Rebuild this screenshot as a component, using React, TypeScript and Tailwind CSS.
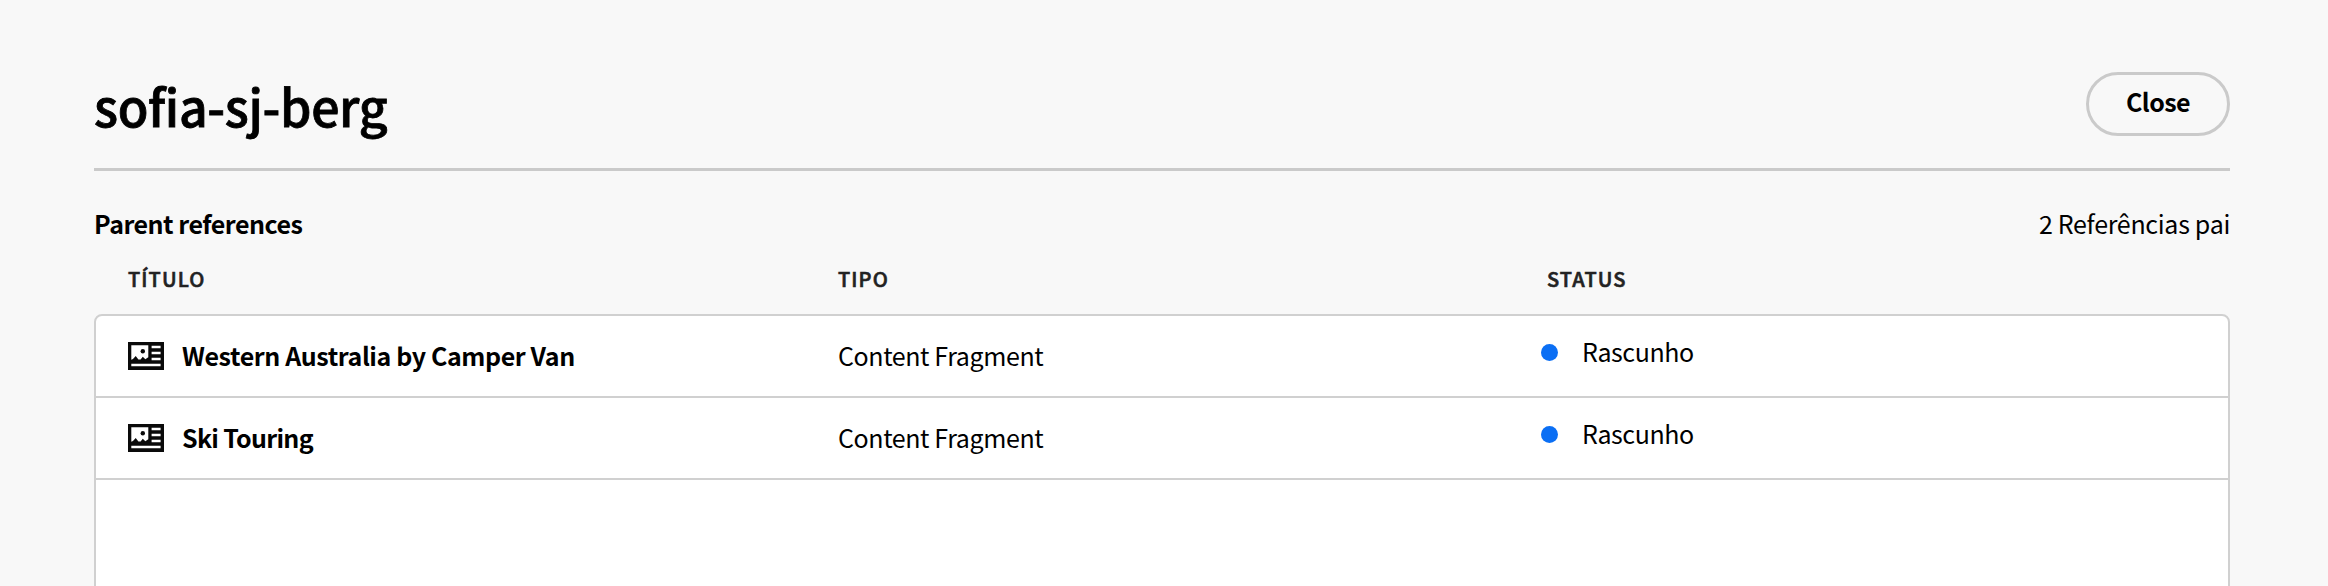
const rows = [
  { title: 'Western Australia by Camper Van', tracking: 'tracking-[-0.4px]', type: 'Content Fragment', status: 'Rascunho' },
  { title: 'Ski Touring', tracking: 'tracking-[-0.7px]', type: 'Content Fragment', status: 'Rascunho' },
];

const columns = 'grid grid-cols-[710px_709px_1fr]';

function FragmentIcon() {
  return (
    <svg className="h-7 w-9 shrink-0" viewBox="0 0 36 28" aria-hidden="true">
      <path
        fillRule="evenodd"
        fill="#0a0a0a"
        d="M0 0H36V28H0ZM3.3 3.3V17.8L5 17L7.7 14L10.4 17.6L12.6 17.6L14.8 14.7L17.3 17.2L20.3 15.3V3.3ZM23.6 3.7V6.3H32.6V3.7ZM23.6 9.8V12.3H32.6V9.8ZM23.6 15.8V18.3H32.6V15.8ZM3.3 21.7V24.2H32.6V21.7Z"
      />
      <circle cx="14.8" cy="9.3" r="2.2" fill="#0a0a0a" />
    </svg>
  );
}

export default function App() {
  return (
    <div className="flex h-[586px] w-[2328px] flex-col overflow-hidden bg-[#f8f8f8] pr-[98px] pl-[94px] font-['Noto_Sans_CJK_SC',sans-serif] text-[25px] tracking-[-0.4px] whitespace-nowrap text-black">
      <header className="flex h-[171px] shrink-0 items-start justify-between border-b-[3px] border-[#cacaca] pt-[69px]">
        <h1 className="text-[50px] leading-[72px] font-medium tracking-[-0.35px] [-webkit-text-stroke:0.8px_black]">
          sofia-sj-berg
        </h1>
        <button className="mt-[3px] flex h-16 w-36 items-center justify-center rounded-full border-[3px] border-[#cacaca] pb-1.5 leading-[36px] font-bold tracking-[-0.5px]">
          Close
        </button>
      </header>
      <div className="flex h-[83px] shrink-0 items-start justify-between pt-[34px] leading-[36px]">
        <h2 className="font-bold tracking-[-0.5px]">Parent references</h2>
        <span className="tracking-[-0.3px]">2 Referências pai</span>
      </div>
      <div className={`${columns} h-[60px] shrink-0 pt-[10px] pl-[34px] text-[20px] leading-[30px] font-medium tracking-[1.1px] text-[#222] [-webkit-text-stroke:0.6px_#222]`}>
        <span>TÍTULO</span>
        <span>TIPO</span>
        <span>STATUS</span>
      </div>
      <div className="-mb-3 flex-1 rounded-lg border-2 border-[#d0d0d0] bg-white">
        {rows.map((row) => (
          <div key={row.title} className={`${columns} h-[82px] border-b-2 border-[#d0d0d0] pl-8 leading-[36px]`}>
            <div className="flex items-start pt-[26px]">
              <FragmentIcon />
              <span className={`-mt-[5px] ml-[18px] font-bold ${row.tracking}`}>{row.title}</span>
            </div>
            <span className="pt-[21px]">{row.type}</span>
            <div className="-ml-[6px] flex items-start pt-[17px]">
              <span className="mt-[11px] size-[17px] shrink-0 rounded-full bg-[#0b6ff4]" />
              <span className="ml-6">{row.status}</span>
            </div>
          </div>
        ))}
      </div>
    </div>
  );
}
